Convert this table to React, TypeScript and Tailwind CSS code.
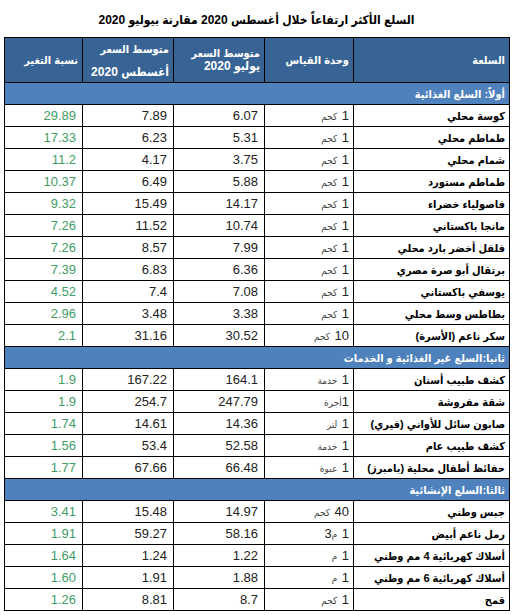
import React from "react";

type Row = [string, string, string, string, string];

const FOOD: Row[] = [
  ["كوسة محلي", "1 كجم", "6.07", "7.89", "29.89"],
  ["طماطم محلي", "1 كجم", "5.31", "6.23", "17.33"],
  ["شمام محلي", "1 كجم", "3.75", "4.17", "11.2"],
  ["طماطم مستورد", "1 كجم", "5.88", "6.49", "10.37"],
  ["فاصولياء خضراء", "1 كجم", "14.17", "15.49", "9.32"],
  ["مانجا باكستاني", "1 كجم", "10.74", "11.52", "7.26"],
  ["فلفل أخضر بارد محلي", "1 كجم", "7.99", "8.57", "7.26"],
  ["برتقال أبو صرة مصري", "1 كجم", "6.36", "6.83", "7.39"],
  ["يوسفي باكستاني", "1 كجم", "7.08", "7.4", "4.52"],
  ["بطاطس وسط محلي", "1 كجم", "3.38", "3.48", "2.96"],
  ["سكر ناعم (الأسرة)", "10 كجم", "30.52", "31.16", "2.1"],
];

const NON_FOOD: Row[] = [
  ["كشف طبيب أسنان", "1 خدمة", "164.1", "167.22", "1.9"],
  ["شقة مفروشة", "1أجرة", "247.79", "254.7", "1.9"],
  ["صابون سائل للأواني (فيري)", "1 لتر", "14.36", "14.61", "1.74"],
  ["كشف طبيب عام", "1 خدمة", "52.58", "53.4", "1.56"],
  ["حفائظ أطفال محلية (بامبرز)", "1 عبوة", "66.48", "67.66", "1.77"],
];

const BUILDING: Row[] = [
  ["جبس وطني", "40 كجم", "14.97", "15.48", "3.41"],
  ["رمل ناعم أبيض", "1 م3", "58.16", "59.27", "1.91"],
  ["أسلاك كهربائية 4 مم وطني", "1 م", "1.22", "1.24", "1.64"],
  ["أسلاك كهربائية 6 مم وطني", "1 م", "1.88", "1.91", "1.60"],
  ["قمح", "1 كجم", "8.7", "8.81", "1.26"],
];

const FONT = '"Liberation Sans", "DejaVu Sans Condensed", "DejaVu Sans", sans-serif';

// number in normal size, arabic unit word smaller (digits inside the word keep full size)
function Unit({ text }: { text: string }) {
  const m = text.match(/^(\d+)(\s?)(.*)$/);
  if (!m) return <>{text}</>;
  const parts = m[3].split(/(\d+)/).filter(Boolean);
  return (
    <>
      <span className="text-[13px] text-[#222]">{m[1]}</span>
      {m[2]}
      {parts.map((p, i) =>
        /\d/.test(p) ? (
          <span key={i} className="text-[13px] text-[#222]">
            {p}
          </span>
        ) : (
          <span key={i} className="text-[10px] text-[#444]">
            {p}
          </span>
        )
      )}
    </>
  );
}

function DataRow({ r }: { r: Row }) {
  return (
    <tr className="h-[22px]">
      <td className="border border-black px-[4px] text-right text-[11px] font-bold leading-[14px] text-black">
        {r[0]}
      </td>
      <td className="border border-black px-[4px] text-right leading-[14px]">
        <Unit text={r[1]} />
      </td>
      <td className="border border-black px-[6px] text-right text-[13px] leading-[14px] text-[#222]">
        {r[2]}
      </td>
      <td className="border border-black px-[6px] text-right text-[13px] leading-[14px] text-[#222]">
        {r[3]}
      </td>
      <td className="border border-black px-[6px] text-right text-[13px] leading-[14px] text-[#3f9d66]">
        {r[4]}
      </td>
    </tr>
  );
}

function Section({ title }: { title: string }) {
  return (
    <tr className="h-[22px] bg-[#4f81bd]">
      <td
        colSpan={5}
        className="border border-black px-[4px] text-right text-[11px] font-bold leading-[14px] text-white"
      >
        {title}
      </td>
    </tr>
  );
}

export default function App() {
  return (
    <div className="min-h-screen bg-white pt-[12px]" style={{ fontFamily: FONT }}>
      <h1
        className="mb-[9px] whitespace-nowrap text-center text-[12px] font-bold leading-[16px] tracking-[-0.2px] text-black"
        dir="rtl"
      >
        السلع الأكثر ارتفاعاً خلال أغسطس 2020 مقارنة بيوليو 2020
      </h1>
      <table dir="rtl" className="ml-[4px] w-[505px] table-fixed border-collapse whitespace-nowrap">
        <colgroup>
          <col className="w-[156px]" />
          <col className="w-[89px]" />
          <col className="w-[91px]" />
          <col className="w-[91px]" />
          <col className="w-[78px]" />
        </colgroup>
        <thead>
          <tr className="h-[45px] bg-[#386395] text-[11px] text-white">
            <th className="border border-black px-[4px] text-right font-bold">السلعة</th>
            <th className="border border-black px-[4px] text-right font-bold">وحدة القياس</th>
            <th className="border border-black px-[4px] text-right font-bold leading-[13px]">
              متوسط السعر
              <br />
              <span className="text-[12px]">يوليو 2020</span>
            </th>
            <th className="border border-black p-0 px-[4px] text-right font-bold">
              <div className="flex h-[44px] flex-col justify-between pb-[2px] pt-[4px] leading-[15px]">
                <span>متوسط السعر</span>
                <span className="text-[12px]">أغسطس 2020</span>
              </div>
            </th>
            <th className="border border-black px-[4px] text-right font-bold">نسبة التغير</th>
          </tr>
        </thead>
        <tbody>
          <Section title="أولاً: السلع الغذائية" />
          {FOOD.map((r, i) => (
            <DataRow key={"f" + i} r={r} />
          ))}
          <Section title="ثانيا:السلع غير الغذائية و الخدمات" />
          {NON_FOOD.map((r, i) => (
            <DataRow key={"n" + i} r={r} />
          ))}
          <Section title="ثالثا:السلع الإنشائية" />
          {BUILDING.map((r, i) => (
            <DataRow key={"b" + i} r={r} />
          ))}
        </tbody>
      </table>
    </div>
  );
}
